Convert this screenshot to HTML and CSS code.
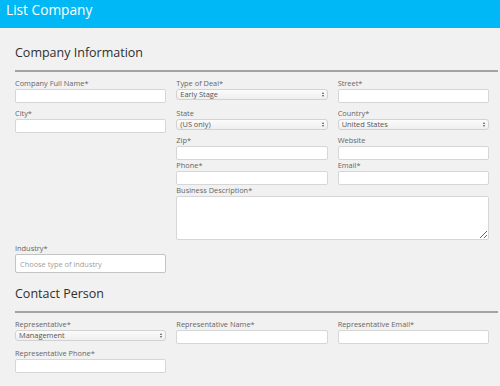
FILE: index.html
```html
<!DOCTYPE html>
<html lang="en">
<head>
  <meta charset="UTF-8">
  <meta name="viewport" content="width=device-width, initial-scale=1">
  <title>List Company</title>
  <link rel="stylesheet" href="styles.css">
</head>
<body>
  <!-- Верхняя синяя полоса с заголовком -->
  <header class="topbar">
    <h1>List Company</h1>
  </header>

  <main class="page">
    <section class="block">
      <h2>Company Information</h2>
      <div class="form-grid company-grid">
        <div class="field">
          <label>Company Full Name*</label>
          <input type="text">
        </div>
        <div class="field">
          <label>Type of Deal*</label>
          <div class="select"><select><option>Early Stage</option></select></div>
        </div>
        <div class="field">
          <label>Street*</label>
          <input type="text">
        </div>

        <div class="field">
          <label>City*</label>
          <input type="text">
        </div>
        <div class="field">
          <label>State</label>
          <div class="select"><select><option>(US only)</option></select></div>
        </div>
        <div class="field">
          <label>Country*</label>
          <div class="select"><select><option>United States</option></select></div>
        </div>

        <div class="field col-2">
          <label>Zip*</label>
          <input type="text">
        </div>
        <div class="field">
          <label>Website</label>
          <input type="text">
        </div>

        <div class="field col-2">
          <label>Phone*</label>
          <input type="text">
        </div>
        <div class="field">
          <label>Email*</label>
          <input type="text">
        </div>

        <div class="field span-2">
          <label>Business Description*</label>
          <textarea></textarea>
        </div>

        <div class="field col-1">
          <label>Industry*</label>
          <input type="text" class="big" placeholder="Choose type of industry">
        </div>
      </div>
    </section>

    <section class="block">
      <h2>Contact Person</h2>
      <div class="form-grid contact-grid">
        <div class="field">
          <label>Representative*</label>
          <div class="select"><select><option>Management</option></select></div>
        </div>
        <div class="field">
          <label>Representative Name*</label>
          <input type="text">
        </div>
        <div class="field">
          <label>Representative Email*</label>
          <input type="text">
        </div>
        <div class="field">
          <label>Representative Phone*</label>
          <input type="text">
        </div>
      </div>
    </section>
  </main>
</body>
</html>
```

FILE: styles.css
```css
/* Базовые настройки страницы */
html, body {
  margin: 0;
  padding: 0;
  background: #f1f1f1;
  font-family: "Open Sans", Arial, sans-serif;
  color: #333;
}
/* Синяя шапка */
.topbar {
  height: 28px;
  background: #00b8f5;
  padding: 0 6px;
}
.topbar h1 {
  margin: 0;
  font-size: 13.7px;
  font-weight: normal;
  line-height: 20px;
  color: #fff;
}
/* Основной блок формы */
.page {
  padding: 4px 2px 0 15px;
}
.block {
  margin-top: 12px;
}
.block h2 {
  margin: 0;
  font-size: 12.5px;
  font-weight: normal;
  line-height: 18px;
  padding-bottom: 8px;
  border-bottom: 2px solid #a3a3a3;
  color: #2f2f2f;
}
/* Сетка полей: три колонки */
.form-grid {
  display: grid;
  grid-template-columns: repeat(3, 1fr);
  column-gap: 10px;
  align-items: start;
  padding-right: 9px;
  margin-top: 6px;
}
.company-grid {
  grid-template-rows: 30px 27px 25px 25px 58px auto;
}
.contact-grid {
  grid-template-rows: 29px auto;
}
.col-1 { grid-column: 1; }
.col-2 { grid-column: 2; }
.span-2 { grid-column: 2 / span 2; }

.field label {
  display: block;
  font-size: 7.4px;
  line-height: 10px;
  margin-bottom: 1px;
  color: #666;
}
.field input,
.field textarea {
  display: block;
  box-sizing: border-box;
  width: 100%;
  height: 14px;
  margin: 0;
  padding: 0 4px;
  background: #fff;
  border: 1px solid #d6d6d6;
  border-radius: 2px;
  font-family: inherit;
  font-size: 7.4px;
}
.field textarea {
  height: 44px;
}
.field input.big {
  height: 19px;
  border-color: #c4c4c4;
}
.field input::placeholder {
  color: #a0a0a0;
}
/* Выпадающие списки со своей стрелкой */
.select {
  position: relative;
}
.select select {
  display: block;
  box-sizing: border-box;
  width: 100%;
  height: 11px;
  margin: 0;
  padding: 0 3px;
  -webkit-appearance: none;
  appearance: none;
  background: linear-gradient(#fbfbfb, #efefef);
  border: 1px solid #d2d2d2;
  border-radius: 3px;
  font-family: inherit;
  font-size: 7.4px;
  line-height: 9px;
  color: #555;
}
.select::before,
.select::after {
  content: "";
  position: absolute;
  right: 4px;
  border-left: 1.5px solid transparent;
  border-right: 1.5px solid transparent;
}
.select::before {
  top: 3px;
  border-bottom: 2px solid #555;
}
.select::after {
  top: 6px;
  border-top: 2px solid #555;
}
```
